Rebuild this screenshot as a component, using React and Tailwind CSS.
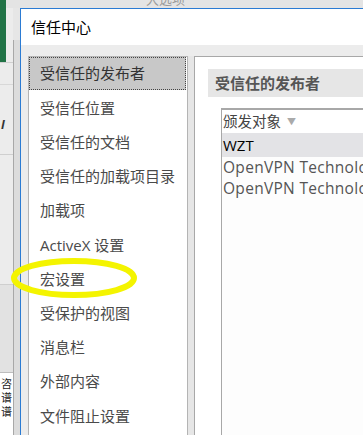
import React from "react";

const items = [
  "受信任的发布者",
  "受信任位置",
  "受信任的文档",
  "受信任的加载项目录",
  "加载项",
  "ActiveX 设置",
  "宏设置",
  "受保护的视图",
  "消息栏",
  "外部内容",
  "文件阻止设置",
];

export default function App() {
  return (
    <div className="relative w-[363px] h-[435px] overflow-hidden bg-[#e6e6e6] flex flex-col font-[family-name:'Open_Sans','Noto_Sans_CJK_SC',sans-serif]">
      {/* top strip of the window behind */}
      <div className="h-[8px] bg-[#e4e4e4] flex shrink-0">
        <div className="w-[6px] bg-[#217346]" />
        <div className="flex-1 relative">
          <span className="absolute left-[140px] top-[-10px] text-[13px] text-[#9a9a9a]">大选项</span>
        </div>
      </div>
      <div className="flex flex-1 min-h-0">
        {/* excel strip behind */}
        <div className="w-[20px] flex shrink-0">
          <div className="w-[13px] flex flex-col bg-[#ececec]">
            <div className="h-[54px] w-[6px] bg-[#217346]" />
            <div className="h-[22px] border-t border-[#cfcfcf]" />
            <div className="h-[70px] border-t border-[#d8d8d8] pt-[34px] pl-[1px] text-[12px] font-bold italic text-[#333] leading-none">I</div>
            <div className="h-[130px] border-t border-[#cfcfcf]" />
            <div className="h-[88px] border-t border-[#cfcfcf] bg-[#e2e2e2]" />
            <div className="flex-1 border-t border-[#bdbdbd] bg-white text-[11px] leading-[14px] text-[#222] pt-[4px] overflow-hidden flex flex-col items-center">
              <span>咨</span>
              <span>谱</span>
              <span>谱</span>
            </div>
          </div>
          <div className="w-[7px] bg-[#dcdcdc] border-l border-[#a8a8a8] mt-[32px]" />
        </div>
        {/* dialog */}
        <div className="flex-1 flex flex-col border-l border-t border-[#2b7bd3] bg-[#ececec] min-w-0">
          <div className="h-[36px] bg-white flex items-center pl-[10px] text-[15px] text-black shrink-0">信任中心</div>
          <div className="flex-1 flex pt-[11px] pl-[7px] min-h-0">
            {/* left nav */}
            <div className="w-[160px] shrink-0 bg-white border border-b-0 border-[#b4b4b4] flex flex-col pr-[1px]">
              {items.map((t, i) =>
                i === 0 ? (
                  <div
                    key={t}
                    className="h-[33px] mb-[1px] bg-[#c8c8c8] border border-dotted border-[#444] flex items-center pl-[10px] text-[15px] text-[#333] whitespace-nowrap"
                  >
                    {t}
                  </div>
                ) : (
                  <div key={t} className="h-[34.2px] flex items-center pl-[11px] text-[15px] text-[#4a4a4a] whitespace-nowrap">
                    {t}
                  </div>
                )
              )}
            </div>
            <div className="w-[6px] shrink-0 bg-[#e6e6e6]" />
            {/* right panel */}
            <div className="flex-1 bg-white border border-r-0 border-b-0 border-[#a8a8a8] pt-[12px] pl-[13px] flex flex-col min-w-0">
              <div className="h-[28px] bg-[#e6e6e6] flex items-center pl-[7px] text-[15px] font-bold text-[#555] whitespace-nowrap shrink-0">
                受信任的发布者
              </div>
              <div className="mt-[11px] ml-[13px] flex-1 border-l border-t-2 border-[#a8a8a8] bg-[#fdfdfd] flex flex-col whitespace-nowrap overflow-hidden">
                <div className="h-[23px] bg-white flex items-center pl-[1px] text-[14.5px] text-[#444]">
                  颁发对象
                  <span className="ml-[6px] text-[9px] text-[#aaa]">▼</span>
                </div>
                <div className="h-[24px] bg-[#e3e3e6] flex items-center pl-[1px] text-[15px] text-black">WZT</div>
                <div className="h-[21px] flex items-center pl-[1px] text-[15.5px] tracking-[0.3px] text-[#555]">OpenVPN Technologies, Inc.</div>
                <div className="h-[21px] flex items-center pl-[1px] text-[15.5px] tracking-[0.3px] text-[#555]">OpenVPN Technologies, Inc.</div>
              </div>
            </div>
          </div>
        </div>
      </div>
      {/* yellow annotation ellipse */}
      <svg className="absolute left-0 top-0 pointer-events-none" width="363" height="435">
        <ellipse cx="74" cy="278" rx="60" ry="17" fill="none" stroke="#f4f400" strokeWidth="6" />
      </svg>
    </div>
  );
}
